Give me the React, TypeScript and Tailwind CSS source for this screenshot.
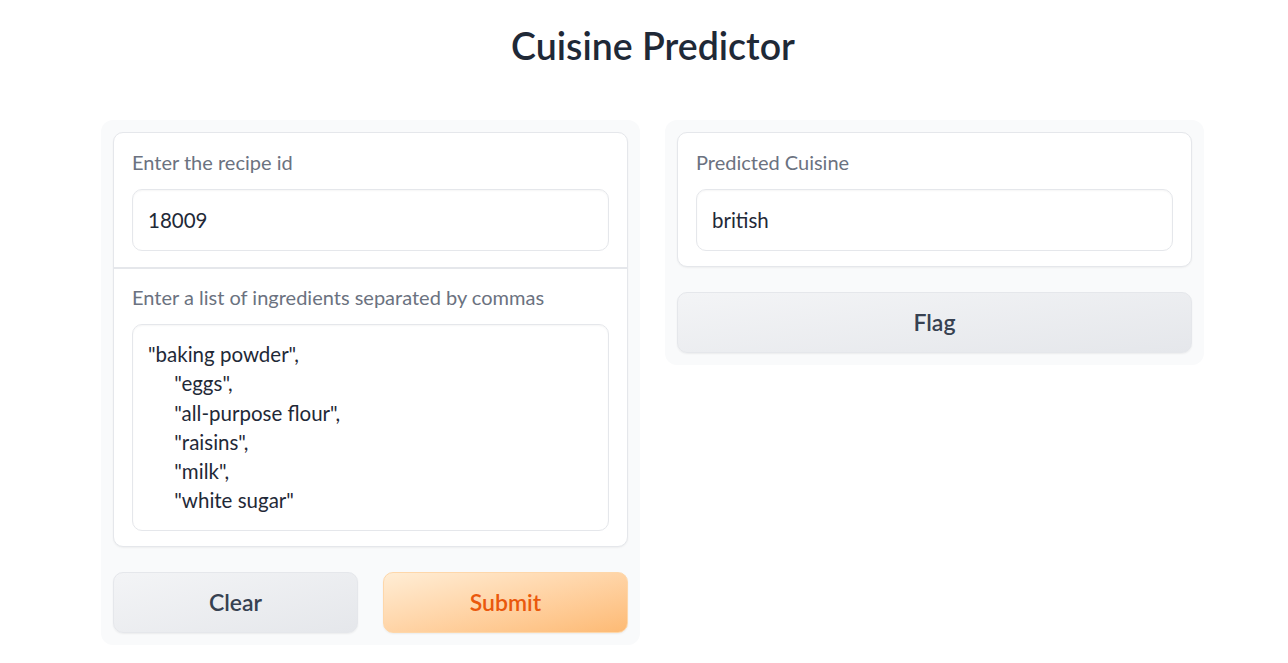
import React from "react";

const font = { fontFamily: "Lato, 'Liberation Sans', sans-serif" };

function Field({ label, value, pb }: { label: string; value: string; pb: string }) {
  return (
    <div className={"px-[18px] pt-[17px] " + pb}>
      <div className="text-[20px] leading-[24px] text-[#6b7280]">{label}</div>
      <div className="mt-[15px] h-[62px] rounded-[10px] border border-[#e5e7eb] bg-white px-[15px] flex items-center text-[20.5px] text-[#1f2937] shadow-[inset_0_1px_2px_rgba(0,0,0,0.04)]">
        {value}
      </div>
    </div>
  );
}

const ingredients = `"baking powder",
     "eggs",
     "all-purpose flour",
     "raisins",
     "milk",
     "white sugar"`;

export default function App() {
  return (
    <div className="min-h-[663px] bg-white" style={font}>
      <h1 className="pt-[24px] text-center text-[37.5px] leading-[44px] font-semibold text-[#1f2937] pl-[18px]">
        Cuisine Predictor
      </h1>
      <div className="ml-[101px] w-[1103px] mt-[52px] flex items-start gap-[25px]">
        <div className="flex-1 rounded-[12px] bg-[#f9fafb] p-[12px] flex flex-col gap-[25px]">
          <div className="rounded-[10px] border border-[#e5e7eb] bg-white shadow-[0_1px_2px_rgba(0,0,0,0.05)]">
            <Field label="Enter the recipe id" value="18009" pb="pb-[16px]" />
            <div className="border-t-2 border-[#e5e7eb]" />
            <div className="px-[18px] pt-[16px] pb-[15px]">
              <div className="text-[20px] leading-[24px] text-[#6b7280]">
                Enter a list of ingredients separated by commas
              </div>
              <div className="mt-[15px] h-[207px] rounded-[10px] border border-[#e5e7eb] bg-white px-[15px] pt-[15px] text-[20.5px] leading-[29.3px] text-[#1f2937] whitespace-pre-wrap shadow-[inset_0_1px_2px_rgba(0,0,0,0.04)]">
                {ingredients}
              </div>
            </div>
          </div>
          <div className="flex gap-[25px]">
            <button className="flex-1 h-[61px] rounded-[10px] border border-[#e5e7eb] bg-gradient-to-br from-[#f3f4f6] to-[#e5e7eb] text-[23px] font-semibold text-[#374151] shadow-[0_1px_2px_rgba(0,0,0,0.06)]">
              Clear
            </button>
            <button className="flex-1 h-[61px] rounded-[10px] border border-[#fed7aa] bg-gradient-to-br from-[#ffedd5] to-[#fdba74] text-[23px] font-semibold text-[#ea580c] shadow-[0_1px_2px_rgba(0,0,0,0.06)]">
              Submit
            </button>
          </div>
        </div>
        <div className="flex-1 rounded-[12px] bg-[#f9fafb] p-[12px] flex flex-col gap-[25px]">
          <div className="rounded-[10px] border border-[#e5e7eb] bg-white shadow-[0_1px_2px_rgba(0,0,0,0.05)]">
            <Field label="Predicted Cuisine" value="british" pb="pb-[15px]" />
          </div>
          <button className="h-[61px] rounded-[10px] border border-[#e5e7eb] bg-gradient-to-br from-[#f3f4f6] to-[#e5e7eb] text-[23px] font-semibold text-[#374151] shadow-[0_1px_2px_rgba(0,0,0,0.06)]">
            Flag
          </button>
        </div>
      </div>
    </div>
  );
}
